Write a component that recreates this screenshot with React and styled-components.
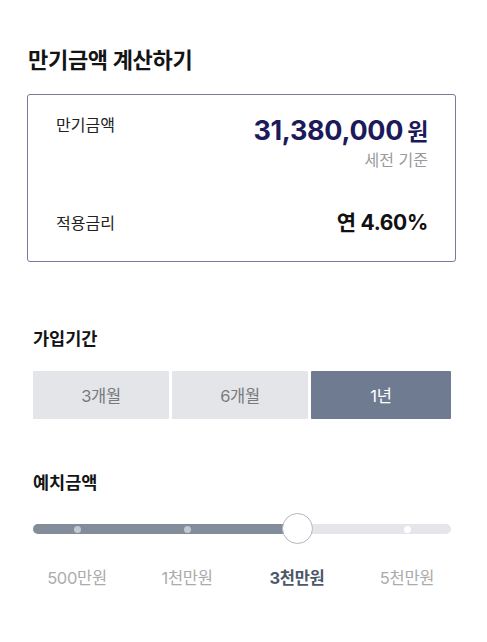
import styled, { createGlobalStyle } from "styled-components";

const GlobalStyle = createGlobalStyle`
  body {
    margin: 0;
    background: #fff;
    font-family: Inter, "Noto Sans CJK KR", "Noto Sans", sans-serif;
    color: #111;
  }
`;

const Page = styled.div`
  width: 487px;
  padding: 45px 0 0;
  box-sizing: border-box;
`;

const Title = styled.h1`
  margin: 0 0 19px 28px;
  font-size: 22px;
  line-height: 30px;
  font-weight: 700;
  color: #141414;
  letter-spacing: -0.3px;
`;

const Card = styled.div`
  margin: 0 31px 0 27px;
  border: 1px solid #7d7898;
  border-radius: 3px;
  padding: 19px 27px 23px 27px;
  display: flex;
  flex-direction: column;
`;

const Row = styled.div`
  display: flex;
  justify-content: space-between;
  align-items: ${({ $center }) => ($center ? "center" : "flex-start")};
  margin-top: ${({ $gap }) => $gap || 0}px;
`;

const Label = styled.span`
  font-size: 16px;
  line-height: 22px;
  color: #222;
  padding-left: 1px;
`;

const ValueCol = styled.div`
  display: flex;
  flex-direction: column;
  align-items: flex-end;
`;

const Amount = styled.div`
  font-size: 27px;
  line-height: 34px;
  font-weight: 700;
  color: #1c1a5a;
  letter-spacing: -0.3px;

  span {
    font-size: 23px;
    margin-left: 4px;
  }
`;

const Sub = styled.div`
  font-size: 16px;
  line-height: 22px;
  color: #9a9a9a;
`;

const Rate = styled.div`
  font-size: 21px;
  line-height: 30px;
  font-weight: 700;
  color: #111;
  letter-spacing: -0.3px;
`;

const SectionTitle = styled.h2`
  margin: ${({ $top }) => $top}px 0 0 33px;
  font-size: 17.5px;
  line-height: 24px;
  font-weight: 700;
  color: #141414;
`;

const Segments = styled.div`
  margin: 20px 36px 0 33px;
  display: grid;
  grid-template-columns: 136px 136px 1fr;
  gap: 3px;
`;

const Segment = styled.button`
  height: 48px;
  border: none;
  border-radius: 1px;
  font-family: inherit;
  font-size: 16.5px;
  letter-spacing: -0.3px;
  background: ${({ $active }) => ($active ? "#6f7b91" : "#e3e5e9")};
  color: ${({ $active }) => ($active ? "#fff" : "#7a7a7a")};
  padding: 0;
`;

const SliderWrap = styled.div`
  margin: 18px 36px 0 33px;
  height: 32px;
  display: flex;
  align-items: center;
  position: relative;
`;

const Track = styled.div`
  position: relative;
  width: 100%;
  height: 10px;
  border-radius: 5px;
  background: #e4e6ea;
`;

const Fill = styled.div`
  height: 100%;
  border-radius: 5px 0 0 5px;
  background: #838c9b;
`;

const Dot = styled.div`
  position: absolute;
  top: 1.5px;
  width: 7px;
  height: 7px;
  margin-left: -3.5px;
  border-radius: 50%;
  background: ${({ $on }) => ($on ? "#c3c7cf" : "#fff")};
`;

const Thumb = styled.div`
  position: absolute;
  top: 0;
  width: 31px;
  height: 31px;
  margin-left: -15.5px;
  border-radius: 50%;
  background: #fff;
  border: 1.5px solid #b3b7bf;
  box-sizing: border-box;
`;

const Ticks = styled.div`
  margin: 21px 0 0 22px;
  display: grid;
  grid-template-columns: repeat(4, 110px);
`;

const Tick = styled.span`
  text-align: center;
  font-size: 16.5px;
  line-height: 24px;
  letter-spacing: -0.3px;
  font-weight: ${({ $active }) => ($active ? 700 : 400)};
  color: ${({ $active }) => ($active ? "#4d576a" : "#ababab")};
`;

const periods = ["3개월", "6개월", "1년"];
const amounts = ["500만원", "1천만원", "3천만원", "5천만원"];
const selected = 2;
// dot centres relative to the track start (33px)
const stops = [44, 154, 264, 374];

export default function App() {
  const thumbX = stops[selected];
  return (
    <Page>
      <GlobalStyle />
      <Title>만기금액 계산하기</Title>
      <Card>
        <Row>
          <Label>만기금액</Label>
          <ValueCol>
            <Amount>
              31,380,000<span>원</span>
            </Amount>
            <Sub>세전 기준</Sub>
          </ValueCol>
        </Row>
        <Row $center $gap={37}>
          <Label>적용금리</Label>
          <Rate>연 4.60%</Rate>
        </Row>
      </Card>

      <SectionTitle $top={65}>가입기간</SectionTitle>
      <Segments>
        {periods.map((p, i) => (
          <Segment key={p} $active={i === 2}>
            {p}
          </Segment>
        ))}
      </Segments>

      <SectionTitle $top={52}>예치금액</SectionTitle>
      <SliderWrap>
        <Track>
          <Fill style={{ width: thumbX }} />
          {stops.map((x, i) =>
            i === selected ? null : (
              <Dot key={x} $on={x < thumbX} style={{ left: x }} />
            )
          )}
        </Track>
        <Thumb style={{ left: thumbX }} />
      </SliderWrap>
      <Ticks>
        {amounts.map((a, i) => (
          <Tick key={a} $active={i === selected}>
            {a}
          </Tick>
        ))}
      </Ticks>
    </Page>
  );
}
